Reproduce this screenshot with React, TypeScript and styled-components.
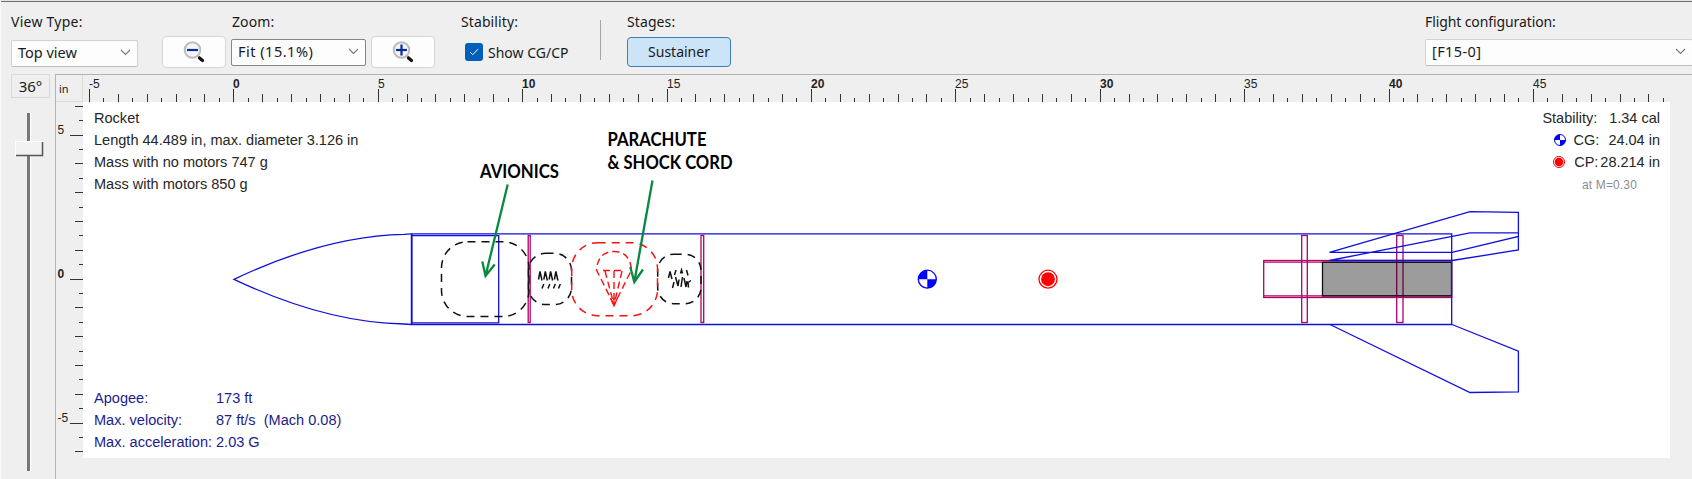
import React from "react";
import styled, { createGlobalStyle } from "styled-components";

const Global = createGlobalStyle`
  *{box-sizing:border-box}
  body{margin:0;background:#efefef;overflow:hidden}
`;
const uiFont = '"Noto Sans", "Open Sans", sans-serif';
const canvasFont = '"Liberation Sans", Arial, sans-serif';

const Shell = styled.div`
  width: 1692px; height: 479px; display: flex; flex-direction: column;
  background: #efefef; border-left: 1px solid #fafafa; border-top: 1px solid #e4e4e4;
  font: 14px ${uiFont}; color: #1a1a1a; overflow: hidden;
`;
const Toolbar = styled.header`
  height: 73px; flex: none; display: flex; border-top: 1px solid #6e6e6e; padding: 10px 0 0 10px;
`;
const Group = styled.section<{ $w?: number; $push?: boolean }>`
  width: ${p => (p.$w ? p.$w + "px" : "auto")}; flex: none;
  margin-left: ${p => (p.$push ? "auto" : 0)};
`;
const Label = styled.div<{ $ls?: number; $indent?: number }>`
  height: 20px; line-height: 20px; white-space: nowrap;
  letter-spacing: ${p => p.$ls ?? 0}px; padding-left: ${p => p.$indent ?? 0}px;
`;
const Controls = styled.div`
  height: 36px; display: flex; align-items: center; gap: 5px; margin-top: 2px;
`;
const Combo = styled.div<{ $w: number; $dark?: boolean; $drop?: number; $ls?: number }>`
  width: ${p => p.$w}px; height: 27px; flex: none; background: #fdfdfd; border-radius: 2px;
  border: 1px solid ${p => (p.$dark ? "#868686" : "#d2d2d2")};
  border-bottom-color: ${p => (p.$dark ? "#868686" : "#bdbdbd")};
  display: flex; align-items: center; justify-content: space-between; padding: 0 6px 2px 6px;
  font-size: 14.5px; margin-top: ${p => p.$drop ?? 0}px; white-space: nowrap;
  letter-spacing: ${p => p.$ls ?? 0}px;
`;
const IconButton = styled.button`
  width: 64px; height: 32px; padding: 0; background: #fdfdfd; border: 1px solid #d6d6d6;
  border-radius: 4px; display: flex; align-items: center; justify-content: center;
`;
const CheckRow = styled.label`
  display: flex; align-items: center; gap: 5px; padding-left: 4px; white-space: nowrap;
`;
const CheckBox = styled.span`
  width: 18px; height: 18px; border-radius: 3px; background: #005fb8; display: flex;
  align-items: center; justify-content: center;
`;
const Divider = styled.div`
  width: 1px; height: 40px; background: #a5a5a5; margin: 8px 26px 0 0;
`;
const StageButton = styled.button`
  width: 104px; height: 30px; border: 1px solid #3c7fb8; border-radius: 4px; background: #cce4f7;
  font: 14px ${uiFont}; color: #1a1a1a; padding: 0 0 1px;
`;
const Work = styled.main`
  flex: 1; display: flex; min-height: 0;
`;
const RotationColumn = styled.aside`
  width: 54px; flex: none; display: flex; flex-direction: column; padding-left: 10px;
`;
const Angle = styled.div`
  width: 39px; height: 24px; border: 1px solid #d9d9d9; line-height: 22px; text-align: center;
  font-size: 15px;
`;
const Slider = styled.div`
  width: 34px; height: 358px; margin-top: 15px;
`;
const View = styled.section`
  flex: 1; border-left: 1px solid #b4b4b4; border-top: 1px solid #b4b4b4;
  display: grid; grid-template: 27px 356px / 27px 1587px; min-width: 0;
`;
const Unit = styled.div`
  border: 1px solid #dcdcdc; border-top: 0; border-left: 0; font-size: 11px; line-height: 28px; padding-left: 3px;
`;
const Drawing = styled.svg`
  display: block; overflow: visible;
`;
const Canvas = styled.div`
  position: relative; background: #fff; font-family: ${canvasFont};
`;
const Info = styled.div<{ $bottom?: boolean }>`
  position: absolute; left: 11px; ${p => (p.$bottom ? "bottom: 4px" : "top: 6px")};
  font-size: 14.55px; line-height: 21.9px; white-space: pre;
  color: ${p => (p.$bottom ? "#1c1c8c" : "#262626")};
`;
const Pair = styled.div`
  display: grid; grid-template-columns: 122px auto;
`;
const Stats = styled.div`
  position: absolute; right: 10px; top: 6px; display: flex; flex-direction: column; align-items: flex-end;
  font-size: 14.5px; line-height: 21.9px; color: #262626; white-space: pre;
`;
const StatRow = styled.div`
  display: flex; align-items: center;
`;
const StatLabel = styled.span<{ $gap: number }>`
  margin-right: ${p => p.$gap}px;
`;
const LegendSvg = styled.svg`
  margin: 0 8px 2px 0; overflow: visible;
`;
const Mach = styled.div`
  font-size: 12px; letter-spacing: .15px; color: #8c8c8c; margin-right: 23px; line-height: 22px;
`;

const Chevron = () => (
  <svg width="11" height="7" viewBox="0 0 11 7" fill="none" stroke="#777" strokeWidth="1.1"><path d="M1 1l4.5 4.5L10 1" /></svg>
);
const Magnifier = ({ plus }: { plus?: boolean }) => (
  <svg width="22" height="22" viewBox="0 0 22 22" fill="none">
    <path d="M14.500 14.500L17 17" stroke="#777" strokeWidth="2" />
    <path d="M16.500 17l3 2.500" stroke="#111" strokeWidth="3.200" strokeLinecap="round" />
    <circle cx="9.500" cy="9" r="7.800" fill="#f3f5fb" stroke="#bcbcbc" strokeWidth="2" />
    <path d="M4 9h11" stroke="#0a2c96" strokeWidth="2.200" />
    {plus && <path d="M9.500 3.500v11" stroke="#0a2c96" strokeWidth="2.200" />}
  </svg>
);
const CgMark = ({ x, y, r }: { x: number; y: number; r: number }) => (
  <g transform={`translate(${x} ${y})`}>
    <circle r={r} fill="#fff" stroke="#00f" />
    <path d={`M0 0V${-r}A${r} ${r} 0 0 0 ${-r} 0ZM0 0V${r}A${r} ${r} 0 0 0 ${r} 0Z`} fill="#00f" />
  </g>
);
const CpMark = ({ x, y, r }: { x: number; y: number; r: number }) => (
  <g transform={`translate(${x} ${y})`}>
    <circle r={r} fill="#fff" stroke="#f00" />
    <circle r={r * 0.77} fill="#f00" />
  </g>
);

const SCALE = 28.88;
const steps = (from: number, to: number) =>
  Array.from({ length: Math.round((to - from) * 2) + 1 }, (_, i) => from + i / 2);
const tickLength = (u: number) => (u % 5 === 0 ? 13 : u % 1 === 0 ? 8 : 4);

const TopRuler = () => (
  <Drawing width="1587" height="27" fontFamily={canvasFont} fontSize="12" fill="#222">
    {steps(-5, 49.5).map(u => {
      const x = Math.round(150.3 + u * SCALE) + 0.5;
      return (
        <g key={u}>
          <path d={`M${x} 27v${-tickLength(u)}`} stroke="#333" />
          {u % 5 === 0 && (
            <text x={x - 0.5} y="12.500" fontWeight={u % 10 === 0 ? 700 : 400}>{u}</text>
          )}
        </g>
      );
    })}
  </Drawing>
);
const SideRuler = () => (
  <Drawing width="27" height="356" fontFamily={canvasFont} fontSize="12" fill="#222">
    {steps(-6, 6).map(u => {
      const y = Math.round(176.6 - u * 28.8) + 0.5;
      return (
        <g key={u}>
          <path d={`M27 ${y}h${-tickLength(u)}`} stroke="#333" />
          {u % 5 === 0 && <text x="1.500" y={y - 1.5} fontWeight={u === 0 ? 700 : 400}>{u}</text>}
        </g>
      );
    })}
  </Drawing>
);

const Rocket = () => (
  <Drawing width="1587" height="356" viewBox="83 102 1587 356" fill="none" strokeWidth="1.3">
    <g stroke="#b0006a">
      <rect x="528.2" y="235.5" width="2" height="87" />
      <rect x="701" y="235.5" width="2.7" height="87" />
      <rect x="1301.7" y="235.5" width="5.6" height="87" />
      <rect x="1396.7" y="235.5" width="6.3" height="87" />
      <rect x="1263.7" y="260.5" width="188" height="37" />
      <path d="M1263.7 262.2H1451.7M1263.7 295.8H1451.7" />
    </g>
    <rect x="1322.5" y="262.3" width="129" height="33.6" fill="#000" fillOpacity=".39" stroke="#111" />
    <g stroke="#1010dc">
      <path d="M234 279.3Q325 236 404 234.300L411.500 233.800H1451.700V324.500H411.500L404 324Q325 322.500 234 279.300Z" />
      <path d="M411.700 234V324.500" strokeWidth="1.900" />
      <path d="M411.700 235.600H498.700V322.800H411.700" />
      <path d="M1329.500 252.300L1470 211.600L1518.400 212.400V250L1452 260.500H1329.500L1470 232.800H1518.400V236.500L1452 252.300Z" />
      <path d="M1330 324.500L1470 392.500L1518.400 391.800V351.200L1452 324.500" />
    </g>
    <g stroke="#111" strokeWidth="1.500" strokeDasharray="8 6">
      <rect x="441.500" y="241.700" width="87.500" height="74.800" rx="26" />
      <rect x="528.500" y="253.300" width="43" height="51.300" rx="17" />
      <rect x="657.700" y="254.200" width="43.300" height="49.500" rx="16" />
    </g>
    <rect x="571.700" y="242.700" width="85.800" height="73" rx="26" stroke="#fa1010" strokeWidth="1.500" strokeDasharray="8 6" />
    <g stroke="#fa1010" strokeWidth="1.400" strokeDasharray="7 4">
      <path d="M614 305L596.500 270Q598 251.500 614 251.500T631.500 270L614 305" />
      <path d="M603 270.500H624M605 271L614 305M614 271V305M622 271L614 305" />
    </g>
    <path d="M610.500 298l3.500 8 3.500-8M614 298v8" stroke="#fa1010" />
    <g stroke="#111" strokeWidth="1.500">
      <path d="M538.500 279.500l1.500-8 2 9M543.800 279.500l1.500-8 2 9M549.100 279.500l1.500-8 2 9M554.400 279.500l1.500-8 2 9" />
      <path d="M542 288.500l1.800-4.500M548 288.500l1.800-4.500M553.500 288.500l1.800-4.500M558.500 288.500l1.800-4.500" />
      <path d="M668.500 278l1.500-6.500 2 7.500M674.500 275l1.500-5M680.500 273.500l1-3.500 1 3.500M686.500 270l1.500 5.500M675.500 277l2.500 9 1-6.500M681 287l1.500-10M684 278l2 9 1-6M672.500 288l1.500-6M688.500 287.500l-.5-5 3-2" />
    </g>
    <CgMark x={927.3} y={279.2} r={9} />
    <CpMark x={1048} y={279.2} r={9} />
    <g stroke="#078a3e" strokeWidth="2.300">
      <path d="M507.700 184.500L485.500 276M482.300 261.500L485.500 276L494.700 264.500" />
      <path d="M652.500 180.500L634.300 282M630.300 267L634.300 282L643 269.500" />
    </g>
    <g fill="#000" fontFamily="Lato, sans-serif" fontWeight="700" fontSize="18.300">
      <text x="480" y="178" textLength="79" lengthAdjust="spacingAndGlyphs">AVIONICS</text>
      <text x="607.500" y="146" textLength="99" lengthAdjust="spacingAndGlyphs">PARACHUTE</text>
      <text x="607.500" y="169" textLength="125" lengthAdjust="spacingAndGlyphs">&amp; SHOCK CORD</text>
    </g>
  </Drawing>
);

export default function App() {
  return (
    <Shell>
      <Global />
      <Toolbar>
        <Group $w={151}>
          <Label $ls={0.25}>View Type:</Label>
          <Controls><Combo $w={127} $drop={2}>Top view<Chevron /></Combo></Controls>
        </Group>
        <Group $w={299}>
          <Label $indent={70} $ls={0.1}>Zoom:</Label>
          <Controls>
            <IconButton><Magnifier /></IconButton>
            <Combo $w={135} $dark $ls={0.5}>Fit (15.1%)<Chevron /></Combo>
            <IconButton><Magnifier plus /></IconButton>
          </Controls>
        </Group>
        <Group $w={139}>
          <Label $ls={0.1}>Stability:</Label>
          <Controls>
            <CheckRow>
              <CheckBox>
                <svg width="10" height="8" viewBox="0 0 10 8" fill="none" stroke="#fff"><path d="M1 4l2.700 2.700L9 1.200" /></svg>
              </CheckBox>
              Show CG/CP
            </CheckRow>
          </Controls>
        </Group>
        <Divider />
        <Group>
          <Label $ls={0.1}>Stages:</Label>
          <Controls><StageButton>Sustainer</StageButton></Controls>
        </Group>
        <Group $push $w={267}>
          <Label $ls={-0.1}>Flight configuration:</Label>
          <Controls><Combo $w={268} $ls={0.4}>[F15-0]<Chevron /></Combo></Controls>
        </Group>
      </Toolbar>
      <Work>
        <RotationColumn>
          <Angle>36°</Angle>
          <Slider>
            <svg width="34" height="358">
              <path d="M17.500 0V358" stroke="#777" strokeWidth="3" />
              <path d="M19.500 0V358" stroke="#fff" />
              <rect x="4.500" y="28.500" width="27" height="14" fill="#f2f2f2" stroke="#fff" />
              <path d="M5 42.500H31.500V29" fill="none" stroke="#555" strokeWidth="1.500" />
            </svg>
          </Slider>
        </RotationColumn>
        <View>
          <Unit>in</Unit>
          <TopRuler />
          <SideRuler />
          <Canvas>
            <Rocket />
            <Info>{"Rocket\nLength 44.489 in, max. diameter 3.126 in\nMass with no motors 747 g\nMass with motors 850 g"}</Info>
            <Info $bottom>
              <Pair><span>Apogee:</span><span>173 ft</span></Pair>
              <Pair><span>Max. velocity:</span><span>{"87 ft/s  (Mach 0.08)"}</span></Pair>
              <Pair><span>Max. acceleration:</span><span>2.03 G</span></Pair>
            </Info>
            <Stats>
              <StatRow><StatLabel $gap={12}>Stability:</StatLabel>1.34 cal</StatRow>
              <StatRow>
                <LegendSvg width="12" height="12"><CgMark x={6} y={6} r={5.500} /></LegendSvg>
                <StatLabel $gap={9}>CG:</StatLabel>24.04 in
              </StatRow>
              <StatRow>
                <LegendSvg width="12" height="12"><CpMark x={5} y={6} r={5.500} /></LegendSvg>
                <StatLabel $gap={2}>CP:</StatLabel>28.214 in
              </StatRow>
              <Mach>at M=0.30</Mach>
            </Stats>
          </Canvas>
        </View>
      </Work>
    </Shell>
  );
}
